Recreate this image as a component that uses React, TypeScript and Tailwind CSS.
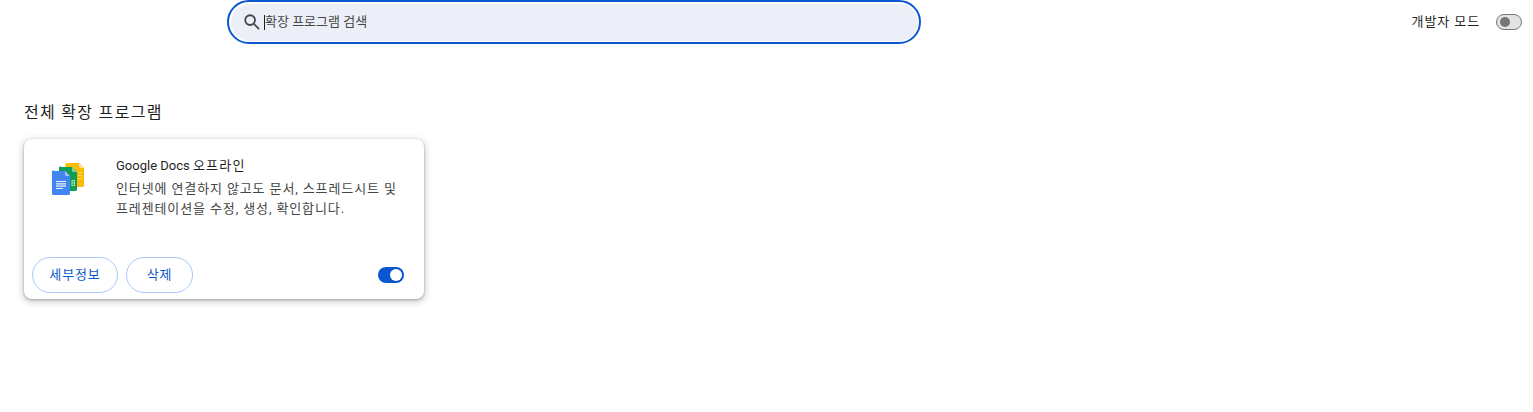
import React from 'react'

const font = 'font-["Roboto","Noto_Sans_CJK_KR","Noto_Sans",sans-serif]'

// 겹쳐진 문서 아이콘
function DocsIcon() {
  return (
    <svg width="32" height="32" viewBox="0 0 32 32" className="shrink-0">
      <path d="M15 0h12l5 5v17.500a1.500 1.500 0 0 1-1.500 1.500h-15.500a1.500 1.500 0 0 1-1.500-1.500v-21a1.500 1.500 0 0 1 1.500-1.500z" fill="#fbbc04" />
      <path d="M27 0l5 5h-3.500a1.500 1.500 0 0 1-1.500-1.500z" fill="#fde293" />
      <path d="M26.500 9h3v1h-3zM26.500 12h3v1h-3zM26.500 15h3v1h-3z" fill="#fde293" />
      <path d="M8.500 4h11.500l5 5v17.500a1.500 1.500 0 0 1-1.500 1.500h-15a1.500 1.500 0 0 1-1.500-1.500v-22a1.500 1.500 0 0 1 1.500-1.500z" fill="#0f9d58" />
      <path d="M20 4l5 5h-3.500a1.500 1.500 0 0 1-1.500-1.500z" fill="#87ceac" />
      <path d="M19.500 17h3.500v6h-3.500zM20.500 18v1.500h1.500v-1.500zM20.500 20.500v1.500h1.500v-1.500z" fill="#a8dab5" fillRule="evenodd" />
      <path d="M1.500 8h11.500l5 5v17.500a1.500 1.500 0 0 1-1.500 1.500h-15a1.500 1.500 0 0 1-1.500-1.500v-22a1.500 1.500 0 0 1 1.500-1.500z" fill="#4285f4" />
      <path d="M13 8l5 5h-3.500a1.500 1.500 0 0 1-1.500-1.500z" fill="#a1c2fa" />
      <path d="M4 18h10v1.100h-10zM4 20.300h10v1.100h-10zM4 22.600h10v1.100h-10zM4 24.900h7v1.100h-7z" fill="#f1f1f1" />
    </svg>
  )
}

function PillButton({ label, width }: { label: string; width: string }) {
  return (
    <button className={`h-9 ${width} rounded-full border border-[#a8c7fa] bg-white text-[13px] tracking-[0.9px] text-[#0b57d0]`}>
      {label}
    </button>
  )
}

export default function App() {
  return (
    <div className={`${font} h-[412px] w-full overflow-hidden bg-white text-[#1f1f1f]`}>
      {/* 상단 바 */}
      <header className="flex h-11 items-start">
        <div className="w-[227px] shrink-0" />
        <div className="h-11 w-[694px] rounded-[22px] border-2 border-[#0b57d0] bg-white p-[1.5px]">
          <div className="flex h-full items-center rounded-full bg-[#eceff8] pl-[12px]">
            <svg width="18" height="18" viewBox="0 0 24 24" fill="none" stroke="#444746" strokeWidth="2.400" className="shrink-0">
              <circle cx="9.500" cy="9.500" r="6.500" />
              <path d="M14.500 14.500l7 7" />
            </svg>
            <span className="ml-[3.500px] h-[15px] w-px bg-[#1f1f1f]" />
            <span className="text-[13px] leading-5 text-[#444746]">확장 프로그램 검색</span>
          </div>
        </div>
        <div className="flex h-11 flex-1 items-center justify-end pr-[11px]">
          <span className="text-[13px] tracking-[0.9px]">개발자 모드</span>
          <div className="ml-4 flex h-4 w-[26px] items-center rounded-full border border-[#747775] bg-[#e3e3e3] pl-[3px]">
            <div className="size-2.5 rounded-full bg-[#747775]" />
          </div>
        </div>
      </header>

      <main className="px-6 pt-[59px]">
        <h2 className="h-5 text-base leading-5 tracking-[1.3px]">전체 확장 프로그램</h2>

        {/* 확장 프로그램 카드 */}
        <section className="mt-4 flex h-40 w-[400px] flex-col rounded-lg bg-white shadow-[0_1px_3px_rgba(60,64,67,0.4),0_2px_6px_2px_rgba(60,64,67,0.18)]">
          <div className="flex flex-1 pl-7 pt-6">
            <DocsIcon />
            <div className="ml-8 w-[284px]">
              <p className="-mt-[6px] text-[13px] leading-[18px]">
                Google Docs <span className="tracking-[1.2px]">오프라인</span>
              </p>
              <p className="mt-[4px] text-[13px] leading-5 tracking-[0.88px] text-[#444746]">
                인터넷에 연결하지 않고도 문서, 스프레드시트 및 프레젠테이션을 수정, 생성, 확인합니다.
              </p>
            </div>
          </div>
          <div className="flex items-center gap-2 pb-1.5 pl-2 pr-5">
            <PillButton label="세부정보" width="w-[86px]" />
            <PillButton label="삭제" width="w-[67px]" />
            <div className="ml-auto flex h-4 w-[26px] items-center justify-end rounded-full bg-[#0b57d0] pr-[2px]">
              <div className="size-3 rounded-full bg-white" />
            </div>
          </div>
        </section>
      </main>
    </div>
  )
}
